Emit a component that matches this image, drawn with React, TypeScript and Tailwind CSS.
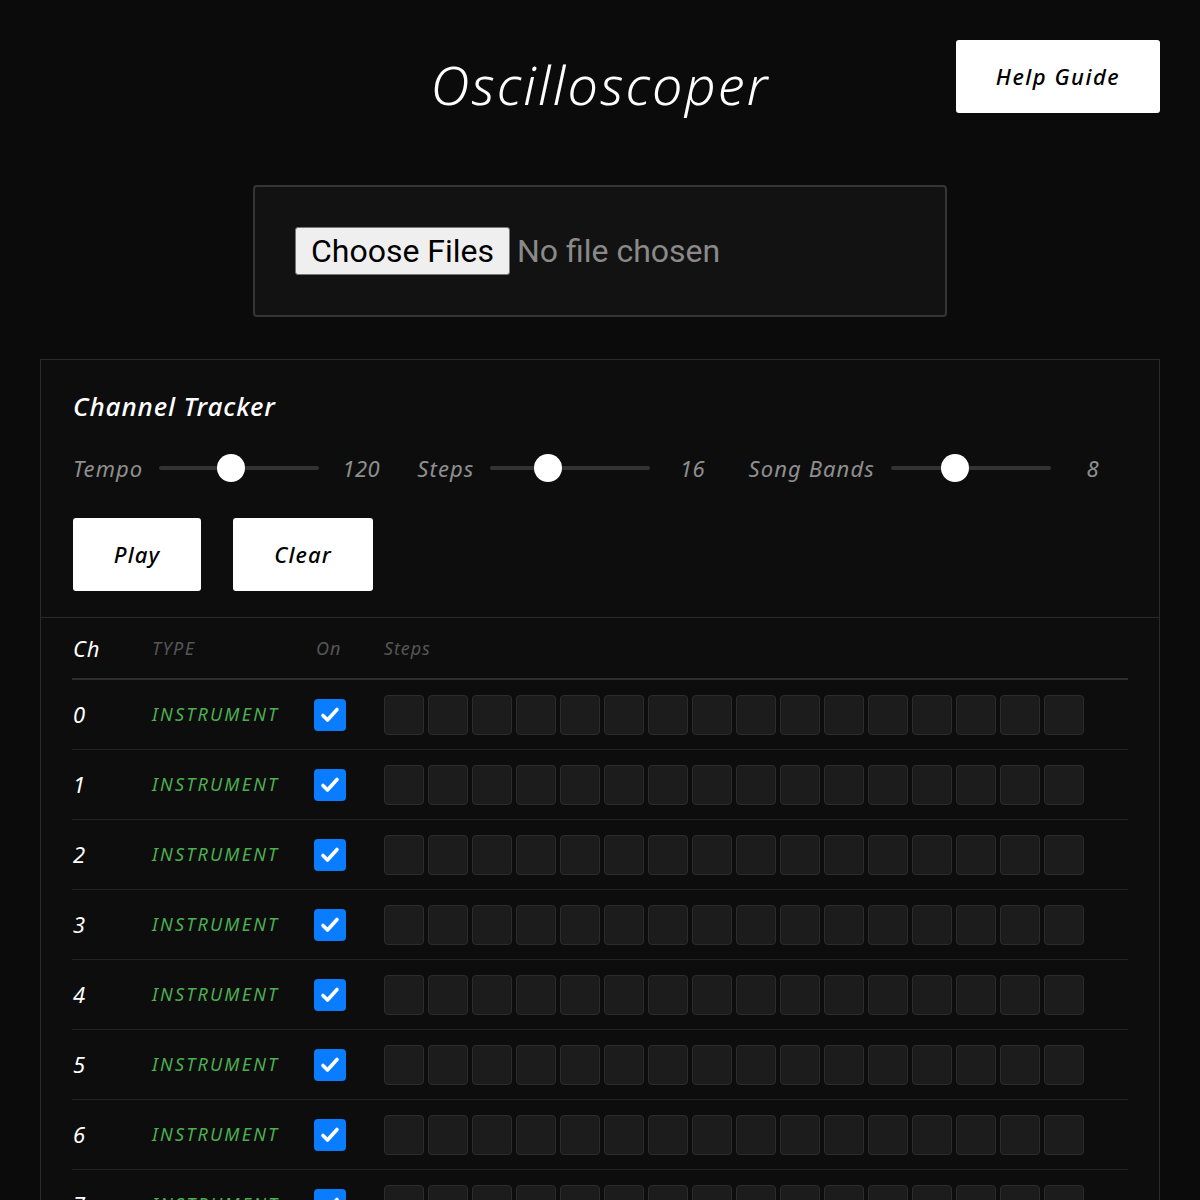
import React from "react";

const font = { fontFamily: '"Noto Sans", "Open Sans", sans-serif' };

type SliderProps = { label: string; value: number; pos: number };

function Slider({ label, value, pos }: SliderProps) {
  return (
    <div className="flex items-center">
      <span className="text-[22px] italic leading-7 tracking-[0.05em] text-[#8f8f8f]">{label}</span>
      <div className="relative ml-4 flex h-7 w-[160px] items-center">
        <div className="h-1 w-full rounded-full bg-[#333]" />
        <div
          className="absolute top-0 h-7 w-7 -translate-x-1/2 rounded-full bg-white"
          style={{ left: `${pos * 100}%` }}
        />
      </div>
      <span className="ml-[22px] w-10 text-center text-[22px] italic leading-7 tracking-[0.02em] text-[#8f8f8f]">{value}</span>
    </div>
  );
}

function CheckMark() {
  return (
    <div className="flex h-8 w-8 items-center justify-center rounded-[4px] bg-[#0a7cff]">
      <svg viewBox="0 0 24 24" className="h-6 w-6" fill="none" stroke="white" strokeWidth="3.6" strokeLinecap="round" strokeLinejoin="round">
        <path d="M5 12.5l4.5 4.5L19 6.5" />
      </svg>
    </div>
  );
}

const channels = Array.from({ length: 10 }, (_, i) => i);
const steps = Array.from({ length: 16 }, (_, i) => i);

export default function App() {
  return (
    <div className="min-h-[1200px] overflow-hidden bg-[#0b0b0b] text-white" style={font}>
      <header className="grid h-[113px] grid-cols-[1fr_auto_1fr] items-start px-10 pt-10">
        <div />
        <h1 className="mt-[6px] text-[54px] font-light italic leading-[76px] tracking-[0.04em]">Oscilloscoper</h1>
        <div className="flex justify-end">
          <button className="h-[73px] w-[204px] rounded-[3px] bg-white text-[22px] font-medium italic tracking-[0.07em] text-black">
            Help Guide
          </button>
        </div>
      </header>

      <div className="mx-auto mt-[72px] flex h-[132px] w-[694px] items-center rounded-[4px] border-2 border-[#353535] bg-[#121212] px-10" style={{ fontFamily: 'Roboto, "Liberation Sans", sans-serif' }}>
        <span className="flex h-12 w-[215px] items-center justify-center rounded-[3px] border border-[#777] bg-[#efefef] text-[32px] text-black">
          Choose Files
        </span>
        <span className="ml-[7px] text-[32px] text-[#8a8a8a]">No file chosen</span>
      </div>

      <section className="mx-10 mt-[42px] border border-[#2a2a2a] bg-[#0d0d0d]">
        <div className="border-b border-[#2a2a2a] px-8 pt-[29px] pb-[26px]">
          <h2 className="text-[26px] font-medium italic leading-[34px] tracking-[0.035em]">Channel Tracker</h2>
          <div className="mt-[31px] flex items-center gap-[36px]">
            <Slider label="Tempo" value={120} pos={0.45} />
            <Slider label="Steps" value={16} pos={0.36} />
            <Slider label="Song Bands" value={8} pos={0.4} />
          </div>
          <div className="mt-[36px] flex gap-8">
            <button className="h-[73px] w-[128px] rounded-[3px] bg-white text-[22px] font-medium italic tracking-[0.05em] text-black">Play</button>
            <button className="h-[73px] w-[140px] rounded-[3px] bg-white text-[22px] font-medium italic tracking-[0.05em] text-black">Clear</button>
          </div>
        </div>

        <div className="px-[31px]">
          <div className="flex h-[62px] items-center border-b-2 border-[#2e2e2e]">
            <span className="w-[80px] pl-px text-[22px] italic tracking-[0.04em]">Ch</span>
            <span className="w-[162px] text-[18px] italic tracking-[0.08em] text-[#555]">TYPE</span>
            <span className="w-[70px] pl-0.5 text-[18px] italic tracking-[0.05em] text-[#555]">On</span>
            <span className="text-[18px] italic tracking-[0.05em] text-[#555]">Steps</span>
          </div>
          {channels.map((ch) => (
            <div key={ch} className="flex h-[70px] items-center border-b border-[#222]">
              <span className="w-[80px] pl-px text-[22px] italic">{ch}</span>
              <span className="w-[162px] text-[18px] italic tracking-[2.2px] text-[#4caf50]">INSTRUMENT</span>
              <div className="w-[70px]">
                <CheckMark />
              </div>
              <div className="flex gap-1">
                {steps.map((s) => (
                  <div key={s} className="h-10 w-10 rounded-[4px] border border-[#2c2c2c] bg-[#1c1c1c]" />
                ))}
              </div>
            </div>
          ))}
        </div>
      </section>
    </div>
  );
}
